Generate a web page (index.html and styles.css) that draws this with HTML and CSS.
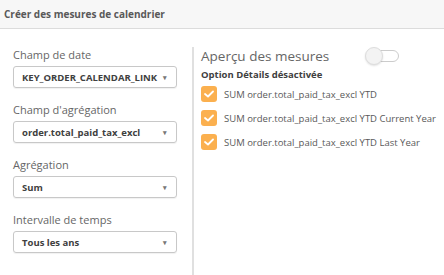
FILE: index.html
```html
<!DOCTYPE html>
<html lang="fr">
<head>
    <meta charset="UTF-8">
    <title>Créer des mesures de calendrier</title>
    <link rel="stylesheet" href="styles.css">
</head>
<body>
    <div class="header">Créer des mesures de calendrier</div>
    <div class="content">
        <div class="fields">
            <div class="field">
                <div class="label">Champ de date</div>
                <div class="select"><span>KEY_ORDER_CALENDAR_LINK</span><span class="caret">▾</span></div>
            </div>
            <div class="field">
                <div class="label">Champ d'agrégation</div>
                <div class="select"><span>order.total_paid_tax_excl</span><span class="caret">▾</span></div>
            </div>
            <div class="field">
                <div class="label">Agrégation</div>
                <div class="select"><span>Sum</span><span class="caret">▾</span></div>
            </div>
            <div class="field">
                <div class="label">Intervalle de temps</div>
                <div class="select"><span>Tous les ans</span><span class="caret">▾</span></div>
            </div>
        </div>
        <div class="preview">
            <div class="preview-head">
                <div class="preview-title">Aperçu des mesures</div>
                <div class="toggle"><div class="knob"></div></div>
            </div>
            <div class="option">Option Détails désactivée</div>
            <ul class="measures">
                <li><span class="check"><svg width="10" height="8" viewBox="0 0 10 8"><path d="M1 4 L4 6.5 L9 1.5" fill="none" stroke="#fff" stroke-width="1.8" stroke-linecap="round" stroke-linejoin="round"/></svg></span>SUM order.total_paid_tax_excl YTD</li>
                <li><span class="check"><svg width="10" height="8" viewBox="0 0 10 8"><path d="M1 4 L4 6.5 L9 1.5" fill="none" stroke="#fff" stroke-width="1.8" stroke-linecap="round" stroke-linejoin="round"/></svg></span>SUM order.total_paid_tax_excl YTD Current Year</li>
                <li><span class="check"><svg width="10" height="8" viewBox="0 0 10 8"><path d="M1 4 L4 6.5 L9 1.5" fill="none" stroke="#fff" stroke-width="1.8" stroke-linecap="round" stroke-linejoin="round"/></svg></span>SUM order.total_paid_tax_excl YTD Last Year</li>
            </ul>
        </div>
    </div>
</body>
</html>
```

FILE: styles.css
```css
body {
    margin: 0;
    font-family: "Open Sans", Arial, sans-serif;
    background: #fff;
    color: #404040;
}
.header {
    height: 28px;
    line-height: 28px;
    padding-left: 4px;
    background: #f7f7f7;
    border-bottom: 1px solid #dcdcdc;
    font-size: 10px;
    font-weight: bold;
    color: #595959;
}
.content {
    display: flex;
    height: 246px;
}
.fields {
    width: 164px;
    padding: 18px 15px 0 13px;
}
.field {
    margin-bottom: 14px;
}
.label {
    font-size: 11px;
    color: #666;
    height: 19px;
}
.select {
    display: flex;
    justify-content: space-between;
    align-items: center;
    height: 20px;
    padding: 0 9px 0 8px;
    border: 1px solid #c8c8c8;
    border-radius: 3px;
    box-shadow: 0 1px 1px rgba(0,0,0,0.06);
    font-size: 9.5px;
    font-weight: bold;
    color: #404040;
}
.caret {
    font-size: 7px;
    color: #777;
}
.preview {
    flex: 1;
    margin-top: 18px;
    border-left: 2px solid #e0e0e0;
    padding-left: 7px;
}
.preview-head {
    display: flex;
    align-items: center;
    height: 22px;
    margin-top: -2px;
}
.preview-title {
    font-size: 13.5px;
    color: #666;
    width: 166px;
}
.toggle {
    position: relative;
    width: 30px;
    height: 10px;
    border: 1px solid #ccc;
    border-radius: 6px;
    background: #fff;
}
.knob {
    position: absolute;
    left: -3px;
    top: -4px;
    width: 16px;
    height: 16px;
    border-radius: 50%;
    background: #f3f3f3;
    border: 1px solid #ddd;
    box-shadow: 0 1px 2px rgba(0,0,0,0.12);
}
.option {
    font-size: 9.5px;
    font-weight: bold;
    color: #404040;
    margin-top: 1px;
}
.measures {
    list-style: none;
    margin: 1px 0 0;
    padding: 0;
}
.measures li {
    display: flex;
    align-items: center;
    height: 24px;
    font-size: 9.5px;
    color: #595959;
}
.check {
    display: flex;
    align-items: center;
    justify-content: center;
    width: 16px;
    height: 16px;
    margin-right: 7px;
    border-radius: 3px;
    background: #fbb04f;
}
```
